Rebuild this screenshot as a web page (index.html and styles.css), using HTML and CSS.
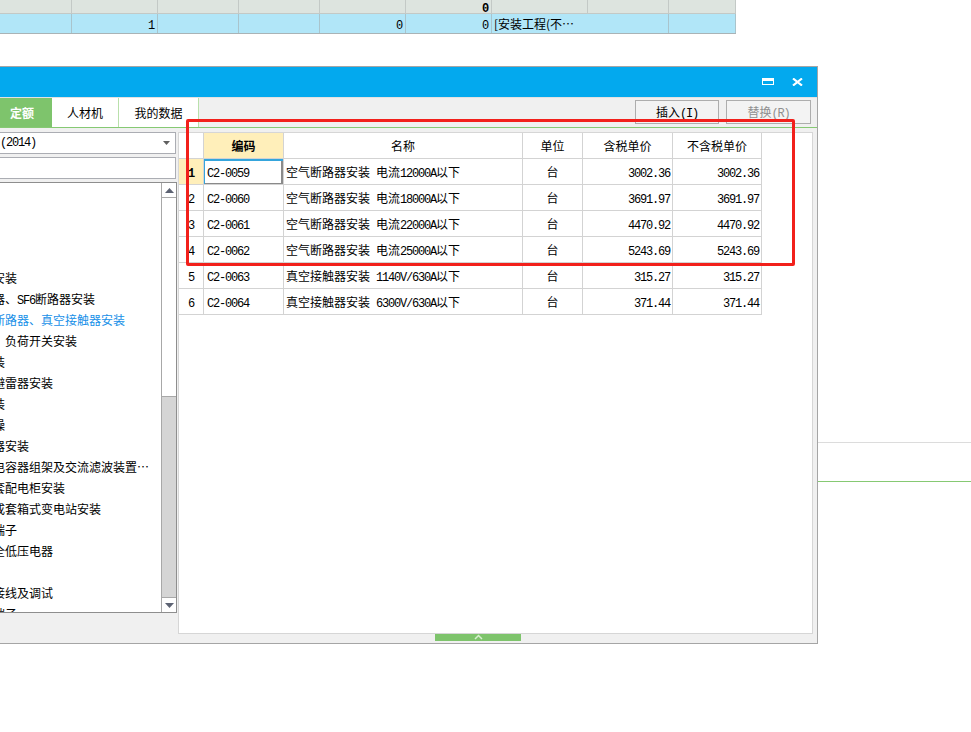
FILE: index.html
```html
<!DOCTYPE html>
<html lang="zh-CN">
<head>
<meta charset="utf-8">
<title>定额</title>
<link rel="stylesheet" href="styles.css">
</head>
<body>
<div class="bg-grid">
  <div class="bg-row r1">
    <div class="c"></div><div class="c"></div><div class="c"></div><div class="c"></div><div class="c"></div>
    <div class="c right"><b class="m">0</b></div>
    <div class="c"></div><div class="c"></div><div class="c"></div>
  </div>
  <div class="bg-row r2">
    <div class="c"></div>
    <div class="c right"><span class="m">1</span></div>
    <div class="c"></div><div class="c"></div>
    <div class="c right"><span class="m">0</span></div>
    <div class="c right"><span class="m">0</span></div>
    <div class="c left"><span class="tx">[安装工程(不…</span></div>
    <div class="c"></div><div class="c"></div>
  </div>
</div>
<div class="under"></div>

<div class="dialog">
  <div class="titlebar">
    <svg class="ico" width="12" height="7" viewBox="0 0 12 7"><rect x="0.5" y="0.5" width="11" height="6" fill="none" stroke="#fff"/><rect x="0" y="0" width="12" height="3" fill="#fff"/></svg>
    <svg class="ico" width="11" height="8" viewBox="0 0 11 8"><path d="M1 0.5 L10 7.5 M10 0.5 L1 7.5" stroke="#fff" stroke-width="2.2" fill="none"/></svg>
  </div>
  <div class="toolbar">
    <div class="tab active">定额</div>
    <div class="tab t2">人材机</div>
    <div class="tab t3">我的数据</div>
    <div class="btns">
      <div class="btn">插入<span class="m">(I)</span></div>
      <div class="btn disabled">替换<span class="m">(R)</span></div>
    </div>
  </div>
  <div class="main">
    <div class="left">
      <div class="combo"><span class="m">(2014)</span><svg class="caret" width="7" height="4" viewBox="0 0 7 4"><path d="M0 0 H7 L3.5 4 Z" fill="#606060"/></svg></div>
      <div class="search"></div>
      <div class="tree">
        <div class="items">
          <div class="it"></div>
          <div class="it"></div>
          <div class="it"></div>
          <div class="it"></div>
          <div class="it">安装</div>
          <div class="it">器、<span class="m">SF6</span>断路器安装</div>
          <div class="it sel">断路器、真空接触器安装</div>
          <div class="it">、负荷开关安装</div>
          <div class="it">装</div>
          <div class="it">避雷器安装</div>
          <div class="it">装</div>
          <div class="it">燥</div>
          <div class="it">器安装</div>
          <div class="it">电容器组架及交流滤波装置…</div>
          <div class="it">套配电柜安装</div>
          <div class="it">成套箱式变电站安装</div>
          <div class="it">端子</div>
          <div class="it">全低压电器</div>
          <div class="it"></div>
          <div class="it">接线及调试</div>
          <div class="it">端子</div>
        </div>
        <div class="sbar">
          <div class="sbtn"><svg width="9" height="5" viewBox="0 0 9 5"><path d="M4.5 0 L9 5 H0 Z" fill="#5d6373"/></svg></div>
          <div class="thumb"></div>
          <div class="track"></div>
          <div class="sbtn down"><svg width="9" height="5" viewBox="0 0 9 5"><path d="M0 0 H9 L4.5 5 Z" fill="#5d6373"/></svg></div>
        </div>
      </div>
    </div>
    <div class="gridpanel">
      <div class="row head">
        <div class="cell"></div>
        <div class="cell center hl">编码</div>
        <div class="cell center">名称</div>
        <div class="cell center">单位</div>
        <div class="cell center">含税单价</div>
        <div class="cell center">不含税单价</div>
      </div>
      <div class="row">
        <div class="cell center hl"><b class="m">1</b></div>
        <div class="cell code focus"><span class="m">C2-0059</span></div>
        <div class="cell name">空气断路器安装<span class="m"> </span>电流<span class="m">12000A</span>以下</div>
        <div class="cell center">台</div>
        <div class="cell price"><span class="m">3002.36</span></div>
        <div class="cell price"><span class="m">3002.36</span></div>
      </div>
      <div class="row">
        <div class="cell center"><span class="m">2</span></div>
        <div class="cell code"><span class="m">C2-0060</span></div>
        <div class="cell name">空气断路器安装<span class="m"> </span>电流<span class="m">18000A</span>以下</div>
        <div class="cell center">台</div>
        <div class="cell price"><span class="m">3691.97</span></div>
        <div class="cell price"><span class="m">3691.97</span></div>
      </div>
      <div class="row">
        <div class="cell center"><span class="m">3</span></div>
        <div class="cell code"><span class="m">C2-0061</span></div>
        <div class="cell name">空气断路器安装<span class="m"> </span>电流<span class="m">22000A</span>以下</div>
        <div class="cell center">台</div>
        <div class="cell price"><span class="m">4470.92</span></div>
        <div class="cell price"><span class="m">4470.92</span></div>
      </div>
      <div class="row">
        <div class="cell center"><span class="m">4</span></div>
        <div class="cell code"><span class="m">C2-0062</span></div>
        <div class="cell name">空气断路器安装<span class="m"> </span>电流<span class="m">25000A</span>以下</div>
        <div class="cell center">台</div>
        <div class="cell price"><span class="m">5243.69</span></div>
        <div class="cell price"><span class="m">5243.69</span></div>
      </div>
      <div class="row">
        <div class="cell center"><span class="m">5</span></div>
        <div class="cell code"><span class="m">C2-0063</span></div>
        <div class="cell name">真空接触器安装<span class="m"> 1140V/630A</span>以下</div>
        <div class="cell center">台</div>
        <div class="cell price"><span class="m">315.27</span></div>
        <div class="cell price"><span class="m">315.27</span></div>
      </div>
      <div class="row">
        <div class="cell center"><span class="m">6</span></div>
        <div class="cell code"><span class="m">C2-0064</span></div>
        <div class="cell name">真空接触器安装<span class="m"> 6300V/630A</span>以下</div>
        <div class="cell center">台</div>
        <div class="cell price"><span class="m">371.44</span></div>
        <div class="cell price"><span class="m">371.44</span></div>
      </div>
    </div>
  </div>
  <div class="footer">
    <div class="handle"><svg width="9" height="6" viewBox="0 0 9 6"><path d="M1 5 L4.5 1.5 L8 5" stroke="#d8f0d0" stroke-width="1.5" fill="none"/></svg></div>
  </div>
</div>

<div class="highlight"></div>
</body>
</html>
```

FILE: styles.css
```css
* { box-sizing: border-box; }
html, body { margin: 0; padding: 0; }
body {
  width: 971px;
  height: 732px;
  overflow: hidden;
  position: relative;
  background: #fff;
  color: #000;
  font-family: "Noto Sans CJK SC", "Noto Sans", sans-serif;
  font-size: 12px;
}
.m {
  font-family: "Liberation Mono", "Noto Sans CJK SC", monospace;
  letter-spacing: -1.2px;
}

/* background sheet */
.bg-grid { width: 736px; }
.bg-row {
  display: grid;
  grid-template-columns: 72px 86px 81px 81px 86px 86px 96px 81px 67px;
}
.bg-row .c {
  min-width: 0;
  border-right: 1px solid #c3c9c6;
  white-space: nowrap;
  overflow: hidden;
}
.bg-row .c.right { text-align: right; padding-right: 3px; }
.bg-row .c.left { padding-left: 2px; text-align: left; }
.tx {
  display: inline-block;
  white-space: nowrap;
  font-family: "Noto Sans CJK SC", sans-serif;
  font-size: 12px;
  color: #000;
}
.r1 { height: 14px; background: #dde4df; border-bottom: 1px solid #c3c9c6; line-height: 13px; }
.r2 { height: 20px; background: #b1e6f8; border-bottom: 1px solid #a9b3b6; line-height: 19px; }
.r2 .c { border-right-color: #a9c4cc; }

.under {
  margin-top: 408px;
  height: 40px;
  border-top: 1px solid #dcdcdc;
  border-bottom: 1px solid #86c973;
}

/* dialog */
.dialog {
  position: absolute;
  top: 66px;
  left: 0;
  width: 818px;
  height: 578px;
  border: 1px solid #a5a5a5;
  border-left: none;
  background: #f0f0f0;
  display: flex;
  flex-direction: column;
}
.titlebar {
  height: 30px;
  flex: none;
  background: #03a9ee;
  display: flex;
  align-items: center;
  justify-content: flex-end;
  gap: 18px;
  padding-right: 14px;
  padding-bottom: 1px;
}
.ico { display: block; }

.toolbar {
  height: 31px;
  flex: none;
  display: flex;
  border-top: 1px solid #e2e2e2;
  border-bottom: 1px solid #86c973;
}
.tab {
  height: 29px;
  display: flex;
  align-items: center;
  justify-content: center;
  background: #fff;
  border-right: 1px solid #b9e0ab;
}
.tab.active {
  width: 52px;
  background: #7ec46c;
  color: #fff;
  font-weight: bold;
  justify-content: flex-start;
  padding-left: 10px;
  border-right: none;
}
.tab.t2 { width: 67px; }
.tab.t3 { width: 80px; }
.btns {
  margin-left: auto;
  display: flex;
  gap: 7px;
  padding-right: 6px;
  padding-top: 2px;
}
.btn {
  width: 84px;
  height: 24px;
  border: 1px solid #adadad;
  background: #f3f3f3;
  text-align: center;
  line-height: 22px;
}
.btn.disabled { width: 85px; color: #8f8f8f; }

.main {
  display: flex;
  gap: 1px;
  padding-top: 4px;
  flex: none;
}
.left {
  width: 177px;
  display: flex;
  flex-direction: column;
}
.combo {
  width: 176px;
  height: 22px;
  background: #fff;
  border: 1px solid #abadb3;
  border-left: none;
  display: flex;
  align-items: center;
  justify-content: space-between;
  padding-right: 5px;
}
.search {
  width: 176px;
  height: 22px;
  margin-top: 3px;
  background: #fff;
  border: 1px solid #abadb3;
  border-left: none;
}
.tree {
  margin-top: 3px;
  width: 177px;
  height: 431px;
  background: #fff;
  border: 1px solid #8e8e8e;
  border-left: none;
  display: flex;
}
.items {
  flex: 1;
  overflow: hidden;
  margin-left: -7px;
}
.it {
  height: 21px;
  line-height: 21px;
  white-space: nowrap;
}
.it.sel { color: #1890e8; }
.sbar {
  width: 15px;
  flex: none;
  display: flex;
  flex-direction: column;
  border-left: 1px solid #a8a8a8;
}
.sbtn {
  height: 15px;
  flex: none;
  background: #fff;
  border-bottom: 1px solid #a8a8a8;
  display: flex;
  align-items: center;
  justify-content: center;
}
.sbtn.down { border-bottom: none; border-top: 1px solid #a8a8a8; }
.thumb { height: 199px; flex: none; background: #fff; border-bottom: 1px solid #a8a8a8; }
.track { flex: 1; background: #d5d5d5; }

.gridpanel {
  width: 635px;
  height: 502px;
  background: #fff;
  border: 1px solid #d6d6d6;
}
.row {
  display: grid;
  grid-template-columns: 25px 80px 239px 60px 90px 89px;
  height: 26px;
}
.cell {
  border-right: 1px solid #d3d3d3;
  border-bottom: 1px solid #d3d3d3;
  white-space: nowrap;
  overflow: hidden;
  line-height: 25px;
}
.cell.center { text-align: center; }
.cell.hl { background: #ffefba; }
.head .cell.hl { font-weight: bold; }
.cell.code { padding-left: 3px; }
.cell.name { padding-left: 2px; }
.cell.price { text-align: right; padding-right: 2px; }
.cell.focus {
  box-shadow: inset 1px 2px 0 #35a5dc, inset -2px -1px 0 #8a8a8a;
}

.footer { flex: 1; }
.handle {
  margin-left: 435px;
  width: 86px;
  height: 7px;
  background: #7ec46c;
  display: flex;
  justify-content: center;
  align-items: flex-start;
}
.handle svg { display: block; }

.highlight {
  position: absolute;
  left: 186px;
  top: 119px;
  width: 609px;
  height: 147px;
  border: 3px solid #f2201b;
  border-radius: 2px;
}
```
